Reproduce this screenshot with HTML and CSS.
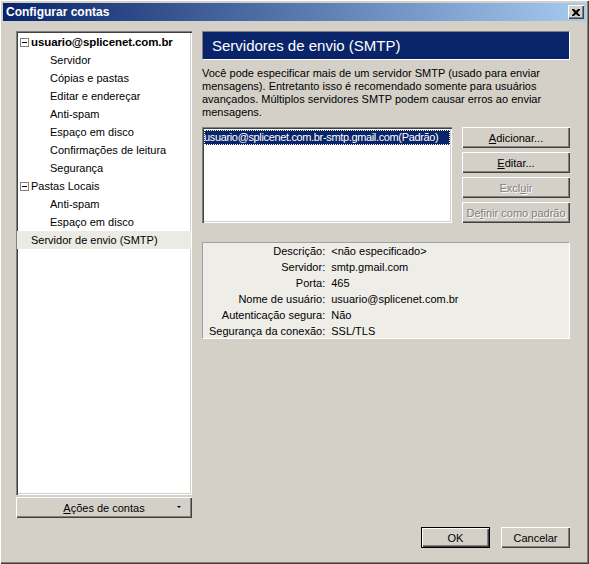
FILE: index.html
```html
<!DOCTYPE html>
<html lang="pt">
<head>
<meta charset="utf-8">
<title>Configurar contas</title>
<link rel="stylesheet" href="styles.css">
</head>
<body>
<div class="window">
  <div class="titlebar">
    <span class="title">Configurar contas</span>
    <span class="close">
      <svg width="8" height="7" viewBox="0 0 8 7"><path d="M0 0h2l2 2 2-2h2v1l-2.5 2.5L8 6v1H6L4 5 2 7H0V6l2.5-2.5L0 1z" fill="#000"/></svg>
    </span>
  </div>
  <div class="main">
    <div class="leftcol">
      <div class="tree">
        <div class="row top bold"><span class="minus"></span>usuario@splicenet.com.br</div>
        <div class="row child">Servidor</div>
        <div class="row child">Cópias e pastas</div>
        <div class="row child">Editar e endereçar</div>
        <div class="row child">Anti-spam</div>
        <div class="row child">Espaço em disco</div>
        <div class="row child">Confirmações de leitura</div>
        <div class="row child">Segurança</div>
        <div class="row top"><span class="minus"></span>Pastas Locais</div>
        <div class="row child">Anti-spam</div>
        <div class="row child">Espaço em disco</div>
        <div class="row top sel">Servidor de envio (SMTP)</div>
      </div>
      <div class="btn actions"><span><u>A</u>ções de contas</span><span class="arrow"></span></div>
    </div>
    <div class="rightcol">
      <div class="header">Servidores de envio (SMTP)</div>
      <p class="desc">Você pode especificar mais de um servidor SMTP (usado para enviar mensagens). Entretanto isso é recomendado somente para usuários avançados. Múltiplos servidores SMTP podem causar erros ao enviar mensagens.</p>
      <div class="listrow">
        <div class="listbox">
          <div class="item">usuario@splicenet.com.br-smtp.gmail.com(Padrão)</div>
        </div>
        <div class="btncol">
          <div class="btn"><u>A</u>dicionar...</div>
          <div class="btn"><u>E</u>ditar...</div>
          <div class="btn disabled">Excl<u>u</u>ir</div>
          <div class="btn disabled">De<u>f</u>inir como padrão</div>
        </div>
      </div>
      <div class="details">
        <div class="dl">Descrição:</div><div class="dv">&lt;não especificado&gt;</div>
        <div class="dl">Servidor:</div><div class="dv">smtp.gmail.com</div>
        <div class="dl">Porta:</div><div class="dv">465</div>
        <div class="dl">Nome de usuário:</div><div class="dv">usuario@splicenet.com.br</div>
        <div class="dl">Autenticação segura:</div><div class="dv">Não</div>
        <div class="dl">Segurança da conexão:</div><div class="dv">SSL/TLS</div>
      </div>
    </div>
  </div>
  <div class="footer">
    <div class="btn default">OK</div>
    <div class="btn">Cancelar</div>
  </div>
</div>
</body>
</html>
```

FILE: styles.css
```css
* { box-sizing: border-box; }
html, body { margin: 0; padding: 0; background: #d4d0c8; }
body {
  font-family: "Liberation Sans", Arial, sans-serif;
  font-size: 11px;
  color: #000;
}
.window {
  width: 589px;
  height: 564px;
  background: #d4d0c8;
  padding: 3px;
  display: flex;
  flex-direction: column;
  box-shadow: inset 1px 1px #ffffff, inset -1px -1px #404040, inset -2px -2px #808080;
}
.titlebar {
  height: 18px;
  background: linear-gradient(to right, #0a246a, #a6caf0);
  display: flex;
  align-items: center;
  justify-content: space-between;
  padding: 0 2px 0 2px;
}
.title {
  color: #fff;
  font-weight: bold;
  font-size: 12px;
  padding-left: 1px;
}
.close {
  width: 16px;
  height: 14px;
  background: #d4d0c8;
  display: flex;
  align-items: center;
  justify-content: center;
  box-shadow: inset 1px 1px #fff, inset -1px -1px #404040, inset -2px -2px #808080;
}
.main {
  display: flex;
  padding: 10px 16px 0 13px;
}
.leftcol {
  width: 176px;
  display: flex;
  flex-direction: column;
}
.tree {
  height: 464px;
  background: #fff;
  padding: 2px 1px;
  box-shadow: inset 1px 1px #808080, inset 2px 2px #404040, inset -1px -1px #fff, inset -2px -2px #d4d0c8;
}
.row {
  height: 18px;
  line-height: 18px;
  display: flex;
  align-items: center;
  white-space: nowrap;
}
.row.top { padding-left: 14px; }
.row.child { padding-left: 33px; }
.row.bold { font-weight: bold; font-size: 11.5px; letter-spacing: -0.1px; }
.row .minus {
  width: 9px;
  height: 9px;
  border: 1px solid #808080;
  margin-left: -11px;
  margin-right: 2px;
  position: relative;
  background: #fff;
}
.row .minus::after {
  content: "";
  position: absolute;
  left: 1px;
  top: 3px;
  width: 5px;
  height: 1px;
  background: #000;
}
.row.sel { background: #ecebe3; }
.btn {
  height: 21px;
  display: flex;
  align-items: center;
  justify-content: center;
  background: #d4d0c8;
  box-shadow: inset 1px 1px #fff, inset -1px -1px #404040, inset -2px -2px #808080;
  white-space: nowrap;
}
.btn.disabled {
  color: #808080;
  text-shadow: 1px 1px #fff;
}
.actions {
  margin-top: 2px;
  position: relative;
}
.actions .arrow {
  position: absolute;
  right: 11px;
  top: 9px;
  width: 0;
  height: 0;
  border-left: 2px solid transparent;
  border-right: 2px solid transparent;
  border-top: 2px solid #000;
}
.rightcol {
  width: 368px;
  margin-left: 10px;
  display: flex;
  flex-direction: column;
}
.header {
  height: 29px;
  background: #0a246a;
  color: #fff;
  font-size: 15px;
  padding-left: 9px;
  display: flex;
  align-items: center;
  border-top: 1px solid #808080;
  border-left: 1px solid #808080;
  border-right: 1px solid #fff;
  border-bottom: 1px solid #fff;
}
.desc {
  margin: 7px 0 0 0;
  line-height: 13px;
  height: 59px;
}
.listrow {
  display: flex;
  gap: 10px;
  margin-top: 1px;
}
.listbox {
  width: 250px;
  height: 96px;
  background: #fff;
  padding: 3px 2px;
  box-shadow: inset 1px 1px #808080, inset 2px 2px #404040, inset -1px -1px #fff, inset -2px -2px #d4d0c8;
}
.item {
  height: 15px;
  line-height: 14px;
  background: #0a246a;
  color: #fff;
  outline: 1px dotted #fff;
  outline-offset: -1px;
  white-space: nowrap;
  overflow: hidden;
  letter-spacing: -0.35px;
}
.btncol {
  width: 108px;
  display: flex;
  flex-direction: column;
  gap: 4px;
}
.details {
  margin-top: 19px;
  height: 97px;
  background: #eeede8;
  border-top: 1px solid #a0a0a0;
  border-left: 1px solid #a0a0a0;
  border-right: 1px solid #fff;
  border-bottom: 1px solid #fff;
  padding: 0 0 0 6px;
  display: grid;
  grid-template-columns: auto 1fr;
  grid-auto-rows: 16px;
  column-gap: 6px;
  line-height: 16px;
}
.dl { text-align: right; }
.footer {
  display: flex;
  justify-content: flex-end;
  gap: 11px;
  padding: 9px 16px 0 0;
}
.footer .btn { width: 69px; }
.footer .btn.default {
  box-shadow: inset 0 0 0 1px #000, inset 2px 2px #fff, inset -2px -2px #404040, inset -3px -3px #808080;
}
```
